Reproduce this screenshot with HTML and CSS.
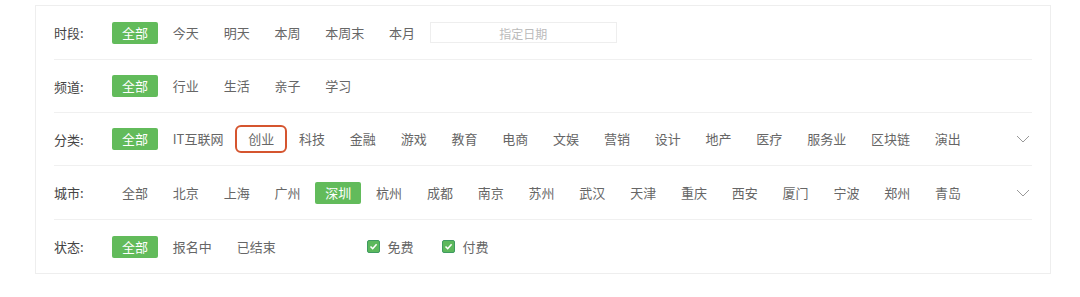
FILE: index.html
```html
<!DOCTYPE html>
<html lang="zh-CN">
<head>
    <meta charset="UTF-8">
    <title>活动筛选</title>
    <link rel="stylesheet" href="styles.css">
</head>
<body>

    <div class="filter-card">
        <div class="filter-row">
            <span class="filter-label">时段:</span>
            <span class="opt active">全部</span>
            <span class="opt">今天</span>
            <span class="opt">明天</span>
            <span class="opt">本周</span>
            <span class="opt">本周末</span>
            <span class="opt">本月</span>
            <div class="date-box">指定日期</div>
        </div>
        <div class="filter-row">
            <span class="filter-label">频道:</span>
            <span class="opt active">全部</span>
            <span class="opt">行业</span>
            <span class="opt">生活</span>
            <span class="opt">亲子</span>
            <span class="opt">学习</span>
        </div>
        <div class="filter-row">
            <span class="filter-label">分类:</span>
            <span class="opt active">全部</span>
            <span class="opt">IT互联网</span>
            <span class="opt marked">创业</span>
            <span class="opt">科技</span>
            <span class="opt">金融</span>
            <span class="opt">游戏</span>
            <span class="opt">教育</span>
            <span class="opt">电商</span>
            <span class="opt">文娱</span>
            <span class="opt">营销</span>
            <span class="opt">设计</span>
            <span class="opt">地产</span>
            <span class="opt">医疗</span>
            <span class="opt">服务业</span>
            <span class="opt">区块链</span>
            <span class="opt">演出</span>
            <svg class="more" width="14" height="8" viewBox="0 0 14 8"><path d="M1 1 L7 7 L13 1" fill="none" stroke="#999" stroke-width="1"/></svg>
        </div>
        <div class="filter-row">
            <span class="filter-label">城市:</span>
            <span class="opt">全部</span>
            <span class="opt">北京</span>
            <span class="opt">上海</span>
            <span class="opt">广州</span>
            <span class="opt active">深圳</span>
            <span class="opt">杭州</span>
            <span class="opt">成都</span>
            <span class="opt">南京</span>
            <span class="opt">苏州</span>
            <span class="opt">武汉</span>
            <span class="opt">天津</span>
            <span class="opt">重庆</span>
            <span class="opt">西安</span>
            <span class="opt">厦门</span>
            <span class="opt">宁波</span>
            <span class="opt">郑州</span>
            <span class="opt">青岛</span>
            <svg class="more" width="14" height="8" viewBox="0 0 14 8"><path d="M1 1 L7 7 L13 1" fill="none" stroke="#999" stroke-width="1"/></svg>
        </div>
        <div class="filter-row">
            <span class="filter-label">状态:</span>
            <span class="opt active">全部</span>
            <span class="opt">报名中</span>
            <span class="opt">已结束</span>
            <div class="checks">
                <label class="check">
                    <span class="check-box"><svg width="9" height="9" viewBox="0 0 9 9"><path d="M1.5 4.5 L3.7 6.7 L7.6 2.3" fill="none" stroke="#fff" stroke-width="1.6"/></svg></span>
                    免费
                </label>
                <label class="check">
                    <span class="check-box"><svg width="9" height="9" viewBox="0 0 9 9"><path d="M1.5 4.5 L3.7 6.7 L7.6 2.3" fill="none" stroke="#fff" stroke-width="1.6"/></svg></span>
                    付费
                </label>
            </div>
        </div>
    </div>

</body>
</html>
```

FILE: styles.css
```css
body {
    margin: 0;
    background-color: #fff;
    font-family: "Noto Sans CJK SC", "Noto Sans", sans-serif;
    font-size: 13px;
    color: #666;
}

.filter-card {
    margin: 5px 0 0 35px;
    width: 1016px;
    border: 1px solid #eee;
    padding: 0 18px;
    box-sizing: border-box;
}

.filter-row {
    display: flex;
    align-items: center;
    height: 53px;
    border-bottom: 1px solid #f0f0f0;
}

.filter-row:nth-child(2),
.filter-row:nth-child(3) {
    height: 52px;
}

.filter-row:last-child {
    border-bottom: none;
}

.filter-label {
    width: 58px;
    flex-shrink: 0;
    color: #444;
}

.opt {
    padding: 0 10px;
    margin-right: 4.8px;
    height: 22px;
    line-height: 22px;
    border-radius: 2px;
    white-space: nowrap;
    cursor: pointer;
}

.opt.active {
    background-color: #62bb5b; /* green selected */
    color: #fff;
}

/* red highlight around one option */
.opt.marked {
    outline: 2px solid #d5552f;
    outline-offset: 1px;
    border-radius: 3px;
}

.date-box {
    width: 187px;
    height: 21px;
    line-height: 21px;
    border: 1px solid #eee;
    box-sizing: border-box;
    text-align: center;
    font-size: 12px;
    color: #bbb;
}

.more {
    margin-left: auto;
    margin-right: 2px;
}

.checks {
    display: flex;
    align-items: center;
    margin-left: 77px;
}

.check {
    display: flex;
    align-items: center;
    margin-right: 29px;
    color: #666;
}

.check-box {
    width: 13px;
    height: 13px;
    box-sizing: border-box;
    background-color: #5cb85c;
    border: 1px solid #3f9a62;
    border-radius: 2px;
    margin-right: 7px;
    display: flex;
    align-items: center;
    justify-content: center;
}
```
